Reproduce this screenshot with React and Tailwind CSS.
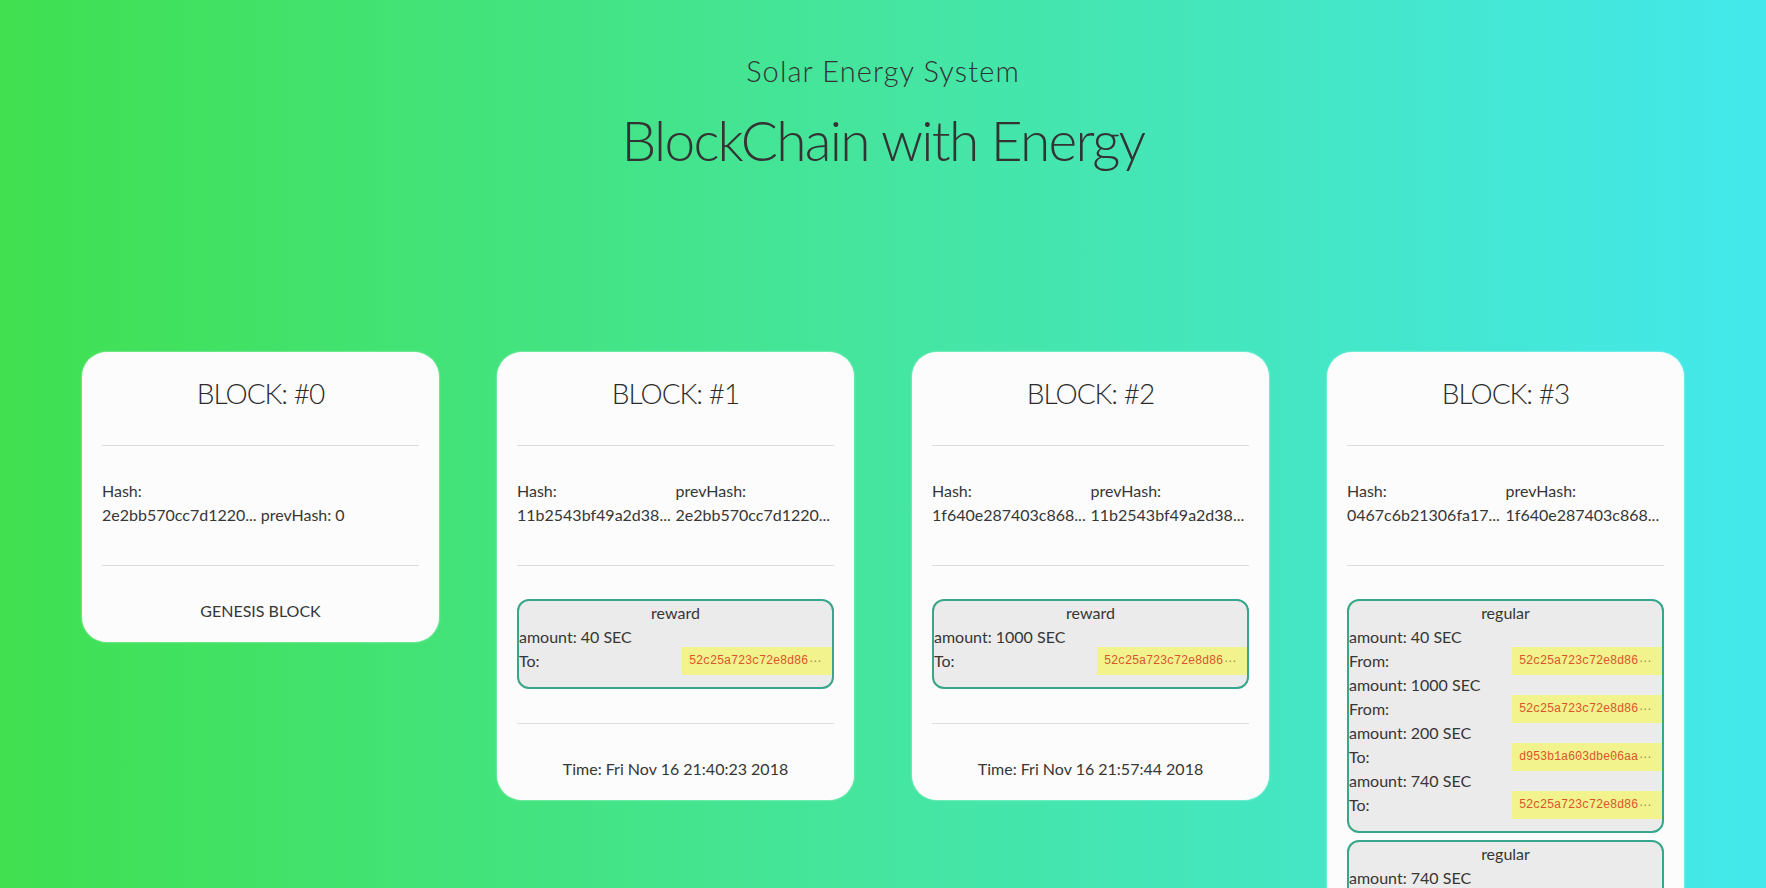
import React from "react";

const FONT = { fontFamily: "Lato, 'Open Sans', 'Noto Sans', sans-serif" };

function Addr({ label, hash }) {
  return (
    <div className="flex h-[24px] items-center justify-between">
      <span>{label}</span>
      <span
        className="flex h-[28px] w-[150px] items-center overflow-hidden whitespace-nowrap bg-[#f3f38d] pl-[7px] text-[12px] text-[#d8552c]"
        style={{ fontFamily: "'Liberation Mono', 'DejaVu Sans Mono', monospace", letterSpacing: "-0.2px" }}
      >
        {hash}
        <span className="ml-[1px] text-[#9a8a50]" style={{ fontFamily: "'DejaVu Sans', sans-serif" }}>⋯</span>
      </span>
    </div>
  );
}

function Tx({ type, items, className = "" }) {
  return (
    <div className={"rounded-[12px] border-2 border-[#38a68b] bg-[#ebebeb] pb-[14px] " + className}>
      <div className="h-[24px] text-center leading-[24px]">{type}</div>
      {items.map((it, i) => (
        <div key={i}>
          <div className="h-[24px] leading-[24px]">amount: {it.amount} SEC</div>
          <Addr label={it.label} hash={it.hash} />
        </div>
      ))}
    </div>
  );
}

function Hr() {
  return <div className="mx-[20px] h-px bg-[#dedede]" />;
}

function Card({ n, hash, prev, txs, time, genesis }) {
  return (
    <div className="w-[357px] shrink-0 self-start rounded-[25px] bg-[#fcfcfc] text-[16px] leading-[24px] text-[#363636] shadow-[0_0_2px_rgba(255,255,255,0.8)]">
      <div className="pt-[24px] pb-[35px] text-center text-[28px] font-light leading-[34px] tracking-[-1px] text-[#2b2b2b]">
        BLOCK: #{n}
      </div>
      <Hr />
      <div className="px-[20px] pt-[33px] pb-[38px]">
        {genesis ? (
          <>
            <div>Hash:</div>
            <div>2e2bb570cc7d1220... prevHash: 0</div>
          </>
        ) : (
          <div className="grid grid-cols-2">
            <div>
              <div>Hash:</div>
              <div>{hash}</div>
            </div>
            <div>
              <div>prevHash:</div>
              <div>{prev}</div>
            </div>
          </div>
        )}
      </div>
      <Hr />
      {!genesis && (
        <>
          <div className="px-[20px] pt-[33px] pb-[34px]">
            {txs.map((t, i) => (
              <Tx key={i} type={t.type} items={t.items} className={i > 0 ? "mt-[7px]" : ""} />
            ))}
          </div>
          <Hr />
        </>
      )}
      <div className="pt-[33px] pb-[19px] text-center">{genesis ? "GENESIS BLOCK" : time}</div>
    </div>
  );
}

export default function App() {
  const H = "52c25a723c72e8d86";
  const D = "d953b1a603dbe06aa";
  return (
    <div
      className="min-h-screen w-full bg-[linear-gradient(to_right,#40e050,#45e5a0,#43e8ec)] pb-[60px] text-[#333]"
      style={FONT}
    >
      <div className="pt-[54px] text-center">
        <div className="text-[29px] font-light leading-[34px] tracking-[1.1px]">Solar Energy System</div>
        <div className="mt-[19px] text-[55px] font-light leading-[67px] tracking-[-1.7px]">BlockChain with Energy</div>
      </div>
      <div className="mt-[178px] flex justify-center gap-[58px]">
        <Card n={0} genesis />
        <Card
          n={1}
          hash="11b2543bf49a2d38..."
          prev="2e2bb570cc7d1220..."
          txs={[{ type: "reward", items: [{ amount: 40, label: "To:", hash: H }] }]}
          time="Time: Fri Nov 16 21:40:23 2018"
        />
        <Card
          n={2}
          hash="1f640e287403c868..."
          prev="11b2543bf49a2d38..."
          txs={[{ type: "reward", items: [{ amount: 1000, label: "To:", hash: H }] }]}
          time="Time: Fri Nov 16 21:57:44 2018"
        />
        <Card
          n={3}
          hash="0467c6b21306fa17..."
          prev="1f640e287403c868..."
          txs={[
            {
              type: "regular",
              items: [
                { amount: 40, label: "From:", hash: H },
                { amount: 1000, label: "From:", hash: H },
                { amount: 200, label: "To:", hash: D },
                { amount: 740, label: "To:", hash: H },
              ],
            },
            {
              type: "regular",
              items: [
                { amount: 740, label: "From:", hash: D },
                { amount: 740, label: "To:", hash: H },
              ],
            },
          ]}
          time="Time: Fri Nov 16 22:05:12 2018"
        />
      </div>
    </div>
  );
}
